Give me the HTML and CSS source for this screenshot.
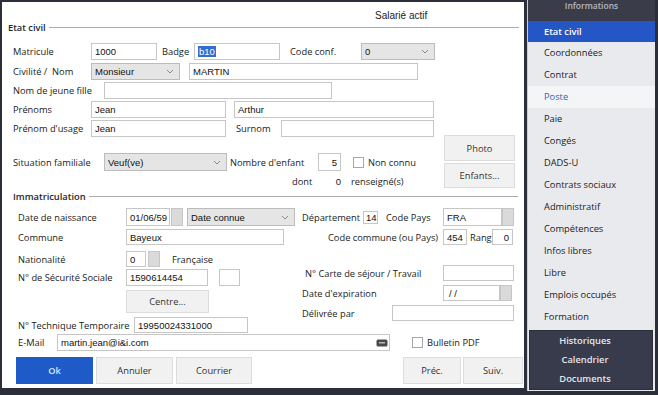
FILE: index.html
```html
<!DOCTYPE html>
<html lang="fr">

<head>
    <meta charset="UTF-8">
    <title>Salarié - Etat civil</title>
    <link rel="stylesheet" href="styles.css">
</head>

<body>
    <div class="form">
        <div class="status">Salarié actif</div>
        <div class="legend legend-civil">Etat civil</div>

        <div class="civil">
            <div class="row r-matricule">
                <span class="lbl w78">Matricule</span>
                <span class="inp w66">1000</span>
                <span class="lbl ml5 w32">Badge</span>
                <span class="inp w86"><mark>b10</mark></span>
                <span class="lbl ml10 w71">Code conf.</span>
                <span class="inp sel w74">0<svg width="8" height="5" viewBox="0 0 8 5"><polyline points="1,1 4,4 7,1" /></svg></span>
            </div>
            <div class="row r-nom">
                <span class="lbl w78">Civilité / &nbsp;Nom</span>
                <span class="inp sel w89">Monsieur<svg width="8" height="5" viewBox="0 0 8 5"><polyline points="1,1 4,4 7,1" /></svg></span>
                <span class="inp ml9 w229">MARTIN</span>
            </div>
            <div class="row r-jf">
                <span class="lbl w91">Nom de jeune fille</span>
                <span class="inp w228"></span>
            </div>
            <div class="row r-prenoms">
                <span class="lbl w78">Prénoms</span>
                <span class="inp w135">Jean</span>
                <span class="inp ml8 w200">Arthur</span>
            </div>
            <div class="row r-usage">
                <span class="lbl w78">Prénom d'usage</span>
                <span class="inp w135">Jean</span>
                <span class="lbl ml10 w45">Surnom</span>
                <span class="inp w153"></span>
            </div>

            <div class="family">
                <div class="family-left">
                    <div class="row r-situation">
                        <span class="lbl w91">Situation familiale</span>
                        <span class="inp sel w123">Veuf(ve)<svg width="8" height="5" viewBox="0 0 8 5"><polyline points="1,1 4,4 7,1" /></svg></span>
                        <span class="lbl ml3 w88">Nombre d'enfant</span>
                        <span class="inp num w23">5</span>
                        <span class="check ml12"></span>
                        <span class="lbl ml4">Non connu</span>
                    </div>
                    <div class="row r-dont">
                        <span class="lbl dont">dont</span>
                        <span class="count">0</span>
                        <span class="lbl ml10">renseigné(s)</span>
                    </div>
                </div>
                <div class="family-btns">
                    <button class="btn btn-photo">Photo</button>
                    <button class="btn btn-enfants">Enfants...</button>
                </div>
            </div>
        </div>

        <div class="legend legend-immat">Immatriculation</div>

        <div class="immat">
            <div class="row r-naissance">
                <span class="lbl w108">Date de naissance</span>
                <span class="inp w44">01/06/59</span>
                <span class="pick ml1"></span>
                <span class="inp sel ml4 w108">Date connue<svg width="8" height="5" viewBox="0 0 8 5"><polyline points="1,1 4,4 7,1" /></svg></span>
                <span class="lbl ml7 w61">Département</span>
                <span class="inp small w15">14</span>
                <span class="lbl ml8 w57">Code Pays</span>
                <span class="inp w59">FRA</span>
                <span class="pick"></span>
            </div>
            <div class="row r-commune">
                <span class="lbl w108">Commune</span>
                <span class="inp w158">Bayeux</span>
                <span class="lbl ml44 w115">Code commune (ou Pays)</span>
                <span class="inp w24">454</span>
                <span class="lbl ml3 w22">Rang</span>
                <span class="inp num w21">0</span>
            </div>

            <div class="twocol">
                <div class="col-left">
                    <div class="row r-nat">
                        <span class="lbl w108">Nationalité</span>
                        <span class="inp w20">0</span>
                        <span class="pick ml2"></span>
                        <span class="lbl ml12">Française</span>
                    </div>
                    <div class="row r-secu">
                        <span class="lbl w108">N° de Sécurité Sociale</span>
                        <span class="inp w82">1590614454</span>
                        <span class="inp ml11 w21"></span>
                    </div>
                    <div class="row r-centre">
                        <button class="btn btn-centre">Centre...</button>
                    </div>
                    <div class="row r-tech">
                        <span class="lbl w116">N° Technique Temporaire</span>
                        <span class="inp w114">19950024331000</span>
                    </div>
                </div>
                <div class="col-right">
                    <div class="row r-carte">
                        <span class="lbl ml3 w138">N° Carte de séjour / Travail</span>
                        <span class="inp w71"></span>
                    </div>
                    <div class="row r-exp">
                        <span class="lbl w141">Date d'expiration</span>
                        <span class="inp w57 date-empty">/ /</span>
                        <span class="pick"></span>
                    </div>
                    <div class="row r-delivree">
                        <span class="lbl w90">Délivrée par</span>
                        <span class="inp w122"></span>
                    </div>
                </div>
            </div>

            <div class="row r-mail">
                <span class="lbl w39">E-Mail</span>
                <span class="inp mail w333">martin.jean@i&amp;i.com<svg width="12" height="8" viewBox="0 0 12 8"><rect x="0.5" y="0.5" width="11" height="7" rx="1.5" fill="#4a4a4a" /><rect x="3" y="3" width="6" height="1.5" fill="#b8b8b8" /></svg></span>
                <span class="check ml22"></span>
                <span class="lbl ml4">Bulletin PDF</span>
            </div>
        </div>

        <div class="actions">
            <button class="btn btn-ok">Ok</button>
            <button class="btn btn-annuler">Annuler</button>
            <button class="btn btn-courrier">Courrier</button>
            <button class="btn btn-prec">Préc.</button>
            <button class="btn btn-suiv">Suiv.</button>
        </div>
    </div>

    <div class="panel">
        <div class="panel-head"><span>Informations</span></div>
        <div class="nav">
            <a class="active">Etat civil</a>
            <a>Coordonnées</a>
            <a>Contrat</a>
            <a class="hover">Poste</a>
            <a>Paie</a>
            <a>Congés</a>
            <a>DADS-U</a>
            <a>Contrats sociaux</a>
            <a>Administratif</a>
            <a>Compétences</a>
            <a>Infos libres</a>
            <a>Libre</a>
            <a>Emplois occupés</a>
            <a>Formation</a>
        </div>
        <div class="panel-foot">
            <a>Historiques</a>
            <a>Calendrier</a>
            <a>Documents</a>
        </div>
    </div>
</body>

</html>
```

FILE: styles.css
```css
* {
    box-sizing: border-box;
}

body {
    margin: 0;
    width: 658px;
    height: 395px;
    overflow: hidden;
    background-color: #2c2f3a;
    display: flex;
    align-items: flex-start;
    font-family: 'Open Sans', 'Noto Sans', sans-serif;
    font-size: 9.3px;
    color: #1a1a1a;
}

.form {
    margin: 2px 0 0 2px;
    width: 522px;
    height: 386px;
    background-color: #fff;
    display: flex;
    flex-direction: column;
}

.status {
    height: 20px;
    padding: 7px 0 0 373px;
    font-family: 'Liberation Sans', Arial, sans-serif;
    font-size: 10px;
    line-height: 13px;
    color: #222;
}

.legend {
    display: flex;
    align-items: center;
    height: 10px;
    font-weight: 600;
    color: #1e1e1e;
}

.legend::after {
    content: "";
    flex: 1;
    border-top: 1px solid #ababab;
    margin-left: 3px;
}

.legend-civil {
    margin: 0 5px 0 6px;
}

.legend-immat {
    margin: 2px 6px 0 11px;
}

.civil {
    padding-left: 11px;
}

.immat {
    padding-left: 16px;
}

.row {
    display: flex;
    align-items: center;
}

.lbl {
    flex: none;
    white-space: nowrap;
}

.inp {
    flex: none;
    height: 100%;
    border: 1px solid #c6c6c6;
    background-color: #fff;
    font-family: 'Liberation Sans', Arial, sans-serif;
    font-size: 9.5px;
    color: #111;
    padding: 0 3px;
    display: flex;
    align-items: center;
    white-space: nowrap;
    overflow: hidden;
}

.inp mark {
    background-color: #2f6fd0;
    color: #fff;
    padding: 0 1px;
}

.sel {
    background-color: #e5e5e5;
    border-color: #bcbcbc;
    justify-content: space-between;
    padding-right: 5px;
}

.sel svg polyline {
    fill: none;
    stroke: #8a8a8a;
    stroke-width: 1;
}

.num {
    justify-content: flex-end;
}

.small {
    height: 13px;
    padding: 0 2px;
}

.pick {
    flex: none;
    width: 12px;
    height: 100%;
    background-color: #dadada;
    border: 1px solid #c6c6c6;
}

.check {
    flex: none;
    width: 11px;
    height: 11px;
    border: 1px solid #a8a8a8;
    background-color: #fff;
}

.mail {
    justify-content: space-between;
    padding-right: 1px;
}

.date-empty {
    padding-left: 5px;
}

.btn {
    flex: none;
    font-family: 'Open Sans', 'Noto Sans', sans-serif;
    font-size: 9.3px;
    color: #333;
    background-color: #f1f1f1;
    border: 1px solid #dcdcdc;
    padding: 0;
    cursor: pointer;
}

/* widths and gaps */
.w15 { width: 15px; }
.w20 { width: 20px; }
.w21 { width: 21px; }
.w22 { width: 22px; }
.w23 { width: 23px; }
.w24 { width: 24px; }
.w32 { width: 32px; }
.w39 { width: 39px; }
.w44 { width: 44px; }
.w45 { width: 45px; }
.w57 { width: 57px; }
.w59 { width: 59px; }
.w61 { width: 61px; }
.w66 { width: 66px; }
.w71 { width: 71px; }
.w74 { width: 74px; }
.w78 { width: 78px; }
.w82 { width: 82px; }
.w86 { width: 86px; }
.w88 { width: 88px; }
.w89 { width: 89px; }
.w90 { width: 90px; }
.w91 { width: 91px; }
.w108 { width: 108px; }
.w114 { width: 114px; }
.w115 { width: 115px; }
.w116 { width: 116px; }
.w122 { width: 122px; }
.w123 { width: 123px; }
.w135 { width: 135px; }
.w138 { width: 138px; }
.w141 { width: 141px; }
.w153 { width: 153px; }
.w158 { width: 158px; }
.w200 { width: 200px; }
.w228 { width: 228px; }
.w229 { width: 229px; }
.w333 { width: 333px; }

.ml1 { margin-left: 1px; }
.ml2 { margin-left: 2px; }
.ml3 { margin-left: 3px; }
.ml4 { margin-left: 4px; }
.ml5 { margin-left: 5px; }
.ml7 { margin-left: 7px; }
.ml8 { margin-left: 8px; }
.ml9 { margin-left: 9px; }
.ml10 { margin-left: 10px; }
.ml11 { margin-left: 11px; }
.ml12 { margin-left: 12px; }
.ml22 { margin-left: 22px; }
.ml44 { margin-left: 44px; }

/* Etat civil rows */
.r-matricule {
    margin-top: 11px;
    height: 17px;
}

.r-nom {
    margin-top: 3px;
    height: 17px;
}

.r-jf,
.r-prenoms,
.r-usage {
    margin-top: 2px;
    height: 17px;
}

.family {
    display: flex;
    margin-top: -2px;
    height: 54px;
}

.family-left {
    width: 431px;
}

.r-situation {
    margin-top: 18px;
    height: 18px;
}

.r-dont {
    margin-top: 3px;
    height: 14px;
}

.dont {
    margin-left: 279px;
    width: 20px;
}

.count {
    width: 29px;
    text-align: right;
    font-family: 'Liberation Sans', Arial, sans-serif;
    font-size: 9.5px;
}

.family-btns {
    display: flex;
    flex-direction: column;
    gap: 2px;
    width: 71px;
}

.btn-photo {
    height: 26px;
}

.btn-enfants {
    height: 25px;
}

/* Immatriculation rows */
.r-naissance {
    margin-top: 7px;
    height: 18px;
}

.r-commune {
    margin-top: 3px;
    height: 16px;
}

.twocol {
    display: flex;
    height: 88px;
}

.col-left {
    width: 284px;
}

.r-nat {
    margin-top: 6px;
    height: 16px;
}

.r-secu {
    margin-top: 2px;
    height: 17px;
}

.r-centre {
    margin-top: 4px;
    height: 23px;
}

.btn-centre {
    margin-left: 108px;
    width: 83px;
    height: 23px;
}

.r-tech {
    margin-top: 4px;
    height: 16px;
}

.r-carte {
    margin-top: 20px;
    height: 16px;
}

.r-exp,
.r-delivree {
    margin-top: 4px;
    height: 16px;
}

.r-mail {
    margin-top: 1px;
    height: 17px;
}

.actions {
    display: flex;
    margin-top: 6px;
    padding-left: 14px;
    height: 27px;
}

.actions .btn {
    height: 27px;
}

.btn-ok {
    width: 77px;
    background-color: #1f5bc8;
    border-color: #1f5bc8;
    color: #d6e3ff;
    font-weight: 600;
}

.btn-annuler {
    margin-left: 3px;
    width: 77px;
}

.btn-courrier {
    margin-left: 3px;
    width: 76px;
}

.btn-prec {
    margin-left: auto;
    width: 58px;
}

.btn-suiv {
    margin: 0 1px 0 2px;
    width: 60px;
}

/* right panel */
.panel {
    margin-left: 3px;
    width: 128px;
    height: 391px;
    background-color: #e8eaee;
    border-left: 1px solid #c9ccd3;
    display: flex;
    flex-direction: column;
}

.panel-head {
    height: 21px;
    background-color: #3a3d49;
    color: #b4b8c2;
    text-align: center;
    font-weight: 600;
    font-size: 8.5px;
    line-height: 11px;
    overflow: hidden;
}

.panel-head span {
    display: block;
    margin-top: 0;
}

.nav a {
    display: block;
    height: 22px;
    line-height: 22px;
    padding-left: 16px;
    color: #222;
    text-decoration: none;
}

.nav a.active {
    height: 21px;
    line-height: 21px;
    background-color: #2457c5;
    color: #fff;
    font-weight: 600;
}

.nav a.hover {
    background-color: #f4f5f7;
    color: #3a5fb0;
}

.panel-foot {
    margin: 2px 2px 0 1px;
    height: 60px;
    background-color: #373b4b;
    border: 1px solid #2c2f3a;
}

.panel-foot a {
    display: block;
    height: 19px;
    line-height: 19px;
    padding-right: 12px;
    text-align: center;
    color: #e4e7ee;
    font-weight: 600;
}
```
